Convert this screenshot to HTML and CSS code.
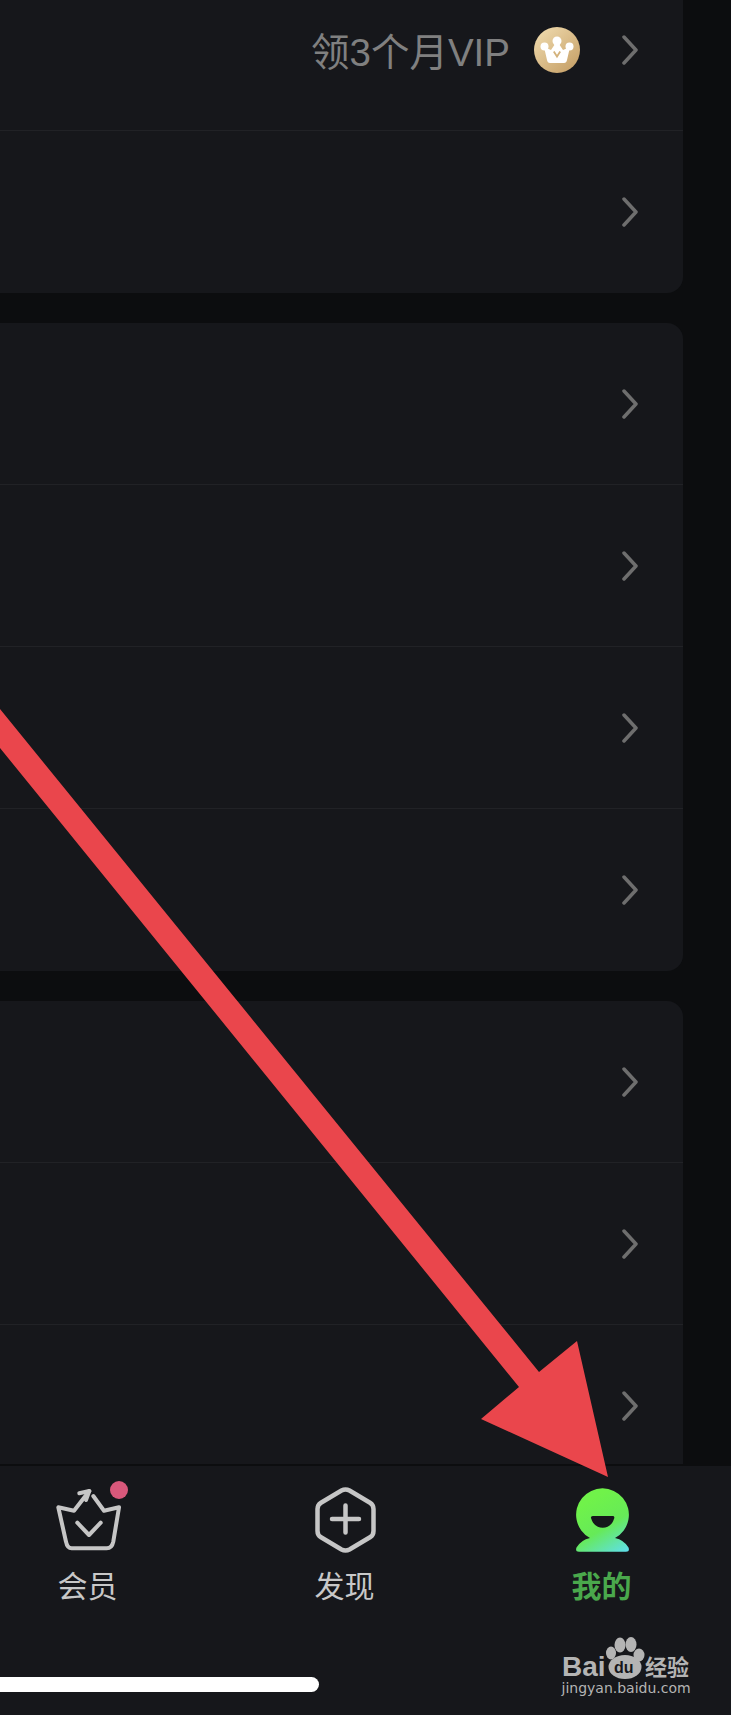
FILE: index.html
```html
<!DOCTYPE html>
<html lang="zh-CN">
<head>
    <meta charset="UTF-8">
    <meta name="viewport" content="width=device-width, initial-scale=1.0">
    <title>我的</title>
    <link rel="stylesheet" href="styles.css">
</head>
<body>
    <div class="app">
        <main class="list">
            <div class="lists-inner">
                <section class="card">
                    <div class="row">
                        <span class="row-note">领3个月VIP</span>
                        <svg class="vip-badge" viewBox="0 0 46 46">
                            <defs>
                                <linearGradient id="gold" x1="0.15" y1="0.1" x2="0.85" y2="0.9">
                                    <stop offset="0" stop-color="#ecd6a8"/>
                                    <stop offset="1" stop-color="#c8a36b"/>
                                </linearGradient>
                            </defs>
                            <circle cx="23" cy="23" r="23" fill="url(#gold)"/>
                            <circle cx="23" cy="14" r="4.500" fill="#fff"/>
                            <circle cx="10.500" cy="19.500" r="4" fill="#fff"/>
                            <circle cx="35.500" cy="19.500" r="4" fill="#fff"/>
                            <path d="M10 20 L17 23 L23 14 L29 23 L36 20 L33 33 Q32.500 36 30 36 L16 36 Q13.500 36 13 33 Z" fill="#fff"/>
                            <path d="M19.800 24.500 L23 29.500 L26.200 24.500" fill="none" stroke="#d3b27c" stroke-width="1.800"/>
                        </svg>
                        <svg class="chevron" viewBox="0 0 16 30"><path d="M2 2 L14 15 L2 28"/></svg>
                    </div>
                    <div class="row">
                        <svg class="chevron" viewBox="0 0 16 30"><path d="M2 2 L14 15 L2 28"/></svg>
                    </div>
                </section>
                <section class="card">
                    <div class="row"><svg class="chevron" viewBox="0 0 16 30"><path d="M2 2 L14 15 L2 28"/></svg></div>
                    <div class="row"><svg class="chevron" viewBox="0 0 16 30"><path d="M2 2 L14 15 L2 28"/></svg></div>
                    <div class="row"><svg class="chevron" viewBox="0 0 16 30"><path d="M2 2 L14 15 L2 28"/></svg></div>
                    <div class="row"><svg class="chevron" viewBox="0 0 16 30"><path d="M2 2 L14 15 L2 28"/></svg></div>
                </section>
                <section class="card">
                    <div class="row"><svg class="chevron" viewBox="0 0 16 30"><path d="M2 2 L14 15 L2 28"/></svg></div>
                    <div class="row"><svg class="chevron" viewBox="0 0 16 30"><path d="M2 2 L14 15 L2 28"/></svg></div>
                    <div class="row"><svg class="chevron" viewBox="0 0 16 30"><path d="M2 2 L14 15 L2 28"/></svg></div>
                </section>
            </div>
        </main>

        <nav class="tabbar">
            <div class="tabs">
                <div class="tab">
                    <svg class="tab-icon" viewBox="0 0 80 80">
                        <g fill="none" stroke="#c6c6c6" stroke-width="4" stroke-linecap="round" stroke-linejoin="round">
                            <path d="M41.300 11 L26 30.700 L10.300 27.300 L18 61.700 Q19.200 68.300 23.700 68.300 L58.700 68.300 Q64 68.300 65.300 61.700 L71 27.300 L56 30.700 L45.300 16"/>
                            <path d="M31.300 13.300 L41.300 11 L38 20"/>
                            <path d="M29.300 42.700 L41 55 L52.700 42.700"/>
                        </g>
                        <circle cx="71" cy="10" r="9" fill="#d9587b"/>
                    </svg>
                    <span class="tab-label">会员</span>
                </div>
                <div class="tab">
                    <svg class="tab-icon" viewBox="0 0 80 80">
                        <path d="M36.500 10.500 Q40.500 8.300 44.500 10.500 L65 22.700 Q68.500 24.800 68.500 29 L68.500 51 Q68.500 55.200 65 57.300 L44.500 69.500 Q40.500 71.700 36.500 69.500 L16 57.300 Q12.500 55.200 12.500 51 L12.500 29 Q12.500 24.800 16 22.700 Z" fill="none" stroke="#c6c6c6" stroke-width="4.500"/>
                        <path d="M27 39 L54 39 M40.500 25.500 L40.500 52.500" fill="none" stroke="#c6c6c6" stroke-width="4.500" stroke-linecap="round"/>
                    </svg>
                    <span class="tab-label">发现</span>
                </div>
                <div class="tab">
                    <svg class="tab-icon" viewBox="0 0 80 80">
                        <defs>
                            <linearGradient id="me" gradientUnits="userSpaceOnUse" x1="28" y1="20" x2="60" y2="74">
                                <stop offset="0" stop-color="#70f24a"/>
                                <stop offset="0.5" stop-color="#66ea58"/>
                                <stop offset="1" stop-color="#5fdfe8"/>
                            </linearGradient>
                        </defs>
                        <path d="M28 58 A26.400 26.400 0 1 1 53 58 Q62 60 66.500 67.500 Q68 71.700 64 71.700 L17 71.700 Q13 71.700 14.500 67.500 Q19 60 28 58 Z" fill="url(#me)"/>
                        <path d="M30.700 36 L50.700 36 Q52.700 36 52.300 38 Q49.500 47.700 40.700 47.700 Q31.900 47.700 29 38 Q28.700 36 30.700 36 Z" fill="#16171b"/>
                    </svg>
                    <span class="tab-label tab-label-active">我的</span>
                </div>
            </div>
            <div class="home-bar"></div>
        </nav>

        <!-- red annotation arrow drawn over the screenshot -->
        <svg class="arrow" viewBox="0 0 731 1715">
            <polygon points="0,709 539,1372 577,1341 608,1477 481,1419 519,1387 0,748"/>
        </svg>

        <svg class="watermark" viewBox="0 0 176 85">
            <g fill="#b4b4b4">
                <ellipse cx="70" cy="15" rx="5.500" ry="7.500"/>
                <ellipse cx="81" cy="14.500" rx="5.500" ry="7.500"/>
                <ellipse cx="89" cy="25" rx="5.500" ry="6.500"/>
                <ellipse cx="61" cy="23" rx="5" ry="6.500"/>
                <ellipse cx="75" cy="37" rx="16.500" ry="12"/>
                <text class="mark-baidu" x="12" y="46">Bai</text>
                <text class="mark-cn" x="95" y="45">经验</text>
                <text class="mark-url" x="11.500" y="63">jingyan.baidu.com</text>
            </g>
            <text class="mark-du" x="64" y="43">du</text>
        </svg>
    </div>
</body>
</html>
```

FILE: styles.css
```css
html, body {
    margin: 0;
    padding: 0;
}
body {
    font-family: "Liberation Sans", "Noto Sans CJK SC", sans-serif;
    background-color: #0c0d0f;
    overflow: hidden;
}
.app {
    position: relative;
    width: 731px;
    height: 1715px;
    display: flex;
    flex-direction: column;
    overflow: hidden;
}
.list {
    flex: 1;
    min-height: 0;
    overflow: hidden;
    border-bottom: 2px solid #0c0d0f;
}
.lists-inner {
    display: flex;
    flex-direction: column;
    gap: 30px;
    margin-top: -31px;
    width: 683px;
}
.card {
    background-color: #16171b;
    border-radius: 0 16px 16px 0;
}
.row {
    box-sizing: border-box;
    height: 162px;
    padding-right: 45px;
    display: flex;
    align-items: center;
    justify-content: flex-end;
    border-bottom: 1px solid #212226;
}
.row:last-child {
    border-bottom: none;
}
.row-note {
    font-size: 38.500px;
    color: #808080;
    margin-right: 24px;
    margin-bottom: 2px;
}
.vip-badge {
    width: 46px;
    height: 46px;
    margin-right: 42px;
}
.chevron {
    width: 16px;
    height: 30px;
    flex-shrink: 0;
}
.chevron path {
    fill: none;
    stroke: #6e6e6e;
    stroke-width: 3.5;
    stroke-linecap: round;
    stroke-linejoin: round;
}
.tabbar {
    height: 249px;
    background-color: #16171b;
    flex-shrink: 0;
    padding-top: 14px;
    box-sizing: border-box;
}
.tabs {
    display: grid;
    grid-template-columns: repeat(3, 257px);
    margin-left: -41px;
}
.tab {
    display: flex;
    flex-direction: column;
    align-items: center;
}
.tab-icon {
    width: 80px;
    height: 80px;
}
.tab-label {
    margin-top: 4px;
    font-size: 30px;
    line-height: 40px;
    color: #c8c8c8;
    font-family: "Noto Sans CJK SC", sans-serif;
}
.tab-label-active {
    color: #4aa84c;
    font-weight: 700;
}
.home-bar {
    width: 359px;
    height: 15px;
    margin: 73px 0 0 -40px;
    border-radius: 8px;
    background-color: #fff;
}
.arrow {
    position: absolute;
    left: 0;
    top: 0;
    width: 731px;
    height: 1715px;
    fill: #ea464c;
}
.watermark {
    position: absolute;
    left: 550px;
    top: 1630px;
    width: 176px;
    height: 85px;
}
.mark-baidu {
    font-family: "Liberation Sans", sans-serif;
    font-weight: 700;
    font-size: 28px;
}
.mark-cn {
    font-family: "Noto Sans CJK SC", sans-serif;
    font-weight: 700;
    font-size: 22px;
}
.mark-url {
    font-family: "DejaVu Sans", sans-serif;
    font-size: 14px;
}
.mark-du {
    font-family: "Liberation Sans", sans-serif;
    font-weight: 700;
    font-size: 16px;
    fill: #16171b;
}
```
